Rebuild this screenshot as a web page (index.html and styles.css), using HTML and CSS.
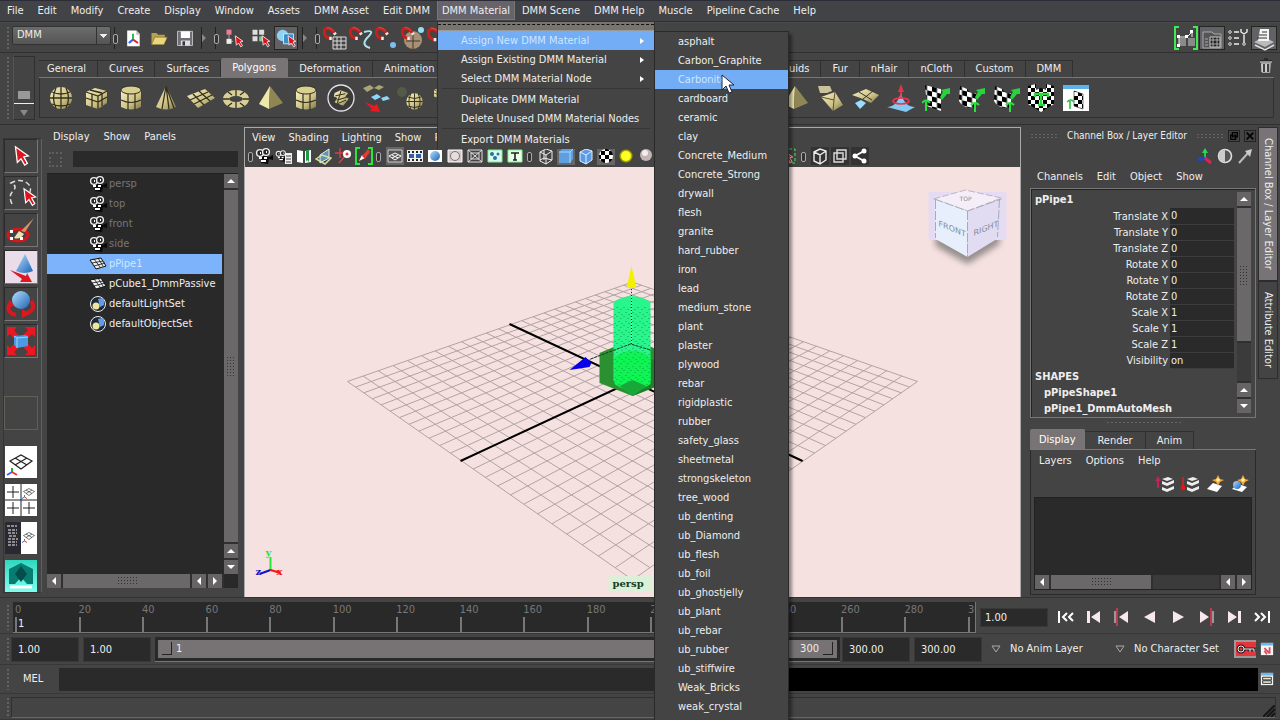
FILE: index.html
```html
<!DOCTYPE html>
<html lang="en">
<head>
<meta charset="utf-8">
<title>DMM Scene Editor</title>
<link rel="stylesheet" href="styles.css">
</head>
<body>
<svg class="defs" aria-hidden="true">
  <defs>
    <linearGradient id="gold" x1="0" y1="0" x2="1" y2="1"><stop offset="0" stop-color="#f8f2c0"/><stop offset=".6" stop-color="#cbc084"/><stop offset="1" stop-color="#7d7446"/></linearGradient>
    <linearGradient id="sky" x1="0" y1="0" x2="1" y2="1"><stop offset="0" stop-color="#b5e0ff"/><stop offset="1" stop-color="#1b62b5"/></linearGradient>
    <linearGradient id="teal" x1="0" y1="0" x2="0" y2="1"><stop offset="0" stop-color="#2fd8c0"/><stop offset="1" stop-color="#7ffff0"/></linearGradient>
    <pattern id="chk" width="8" height="8" patternUnits="userSpaceOnUse"><rect width="8" height="8" fill="#fff"/><path d="M0 0h4v4H0zM4 4h4v4H4z" fill="#000"/></pattern>
    <pattern id="chkbig" width="10" height="10" patternUnits="userSpaceOnUse" patternTransform="skewY(14)"><rect width="10" height="10" fill="#fff"/><path d="M0 0h5v5H0zM5 5h5v5H5z" fill="#000"/></pattern>
    <pattern id="specks" width="7" height="9" patternUnits="userSpaceOnUse"><path d="M1 1h1v1H1zM5 3h1v1H5zM3 6h1v1H3zM6 8h1v1H6z" fill="#0a7a3c"/></pattern>
    <filter id="soft" x="-20%" y="-20%" width="140%" height="140%"><feGaussianBlur stdDeviation="3"/></filter>
  </defs>
  <symbol id="arrow" viewBox="0 0 24 24"><path d="M6 2l2 17 4-4 4 7 3-2-4-7 5-1z" fill="#e0121c" stroke="#fff" stroke-width="1.4"/></symbol>
  <symbol id="magnet" viewBox="0 0 24 24"><path d="M12 19C1 18-1 5 6 3c6-1 9 3 13 8" fill="none" stroke="#c8201c" stroke-width="5"/><path d="M6 2c4-1 8 2 11 5" fill="none" stroke="#ee6a5c"/><path d="M10 19l4 0M18 10l2 3" stroke="#eee" stroke-width="5"/></symbol>
  <symbol id="sphere" viewBox="0 0 28 28"><circle cx="14" cy="14" r="11" fill="url(#gold)"/><path d="M3 14h22M5 8q9 4 18 0M5 20q9 4 18 0M14 3v22M9 4q-5 10 0 20M19 4q5 10 0 20" fill="none" stroke="#34301d" stroke-width="1.3"/></symbol>
  <symbol id="box" viewBox="0 0 28 28"><path d="M4 8l9-4 12 3v12l-9 6-12-4z" fill="url(#gold)"/><path d="M4 8l12 4 9-5M16 12v13M8 6l12 3M10 10v13M4 14l12 4 9-5M20 9v13" fill="none" stroke="#34301d" stroke-width="1.3"/></symbol>
  <symbol id="cyl" viewBox="0 0 28 28"><path d="M4 6v17q10 5 20 0V6z" fill="url(#gold)"/><ellipse cx="14" cy="6" rx="10" ry="4" fill="#d8d093" stroke="#34301d"/><path d="M4 16q10 5 20 0M11 10v16M18 10v16" fill="none" stroke="#34301d" stroke-width="1.2"/></symbol>
  <symbol id="cone" viewBox="0 0 28 28"><path d="M14 2L4 23q10 5 20 0z" fill="url(#gold)"/><path d="M14 2l-4 23M14 2l3 23M14 2l8 22" stroke="#34301d" stroke-width="1.3"/></symbol>
  <symbol id="plane" viewBox="0 0 28 28"><path d="M0 12L18 5l10 9-17 10z" fill="url(#gold)"/><path d="M3 16l18-8M7 20l18-9M6 10l11 11M12 7l11 10" stroke="#34301d" stroke-width="1.3"/></symbol>
  <symbol id="torus" viewBox="0 0 28 28"><ellipse cx="14" cy="15" rx="10" ry="6" fill="none" stroke="#d8cf98" stroke-width="6"/><path d="M14 6v6M14 18v6M6 8l4 3M22 8l-4 3M6 22l4-3M22 22l-4-3M1 15h6M21 15h6" stroke="#34301d" stroke-width="1.3"/></symbol>
  <symbol id="pyr" viewBox="0 0 28 28"><path d="M13 2L2 20l10 5z" fill="#eee8aa"/><path d="M13 2l-1 23 14-6z" fill="#8f8656"/></symbol>
  <symbol id="patch" viewBox="0 0 28 28"><path d="M5 7l8-4 11 4-4 5 5 3-8 10-12-5 4-6-5-2z" fill="url(#gold)"/><path d="M6 11l14-3M8 17l14-4M9 22l12-5M14 4l-5 17" stroke="#34301d" stroke-width="1.4"/></symbol>
  <symbol id="checks" viewBox="0 0 28 28"><path d="M3 1l16 4v22L5 22z" fill="url(#chkbig)"/><path d="M18 13l3-5-2-2 9-2 0 6-3 0-5 6z" fill="#29d33c"/><path d="M0 19q4-5 8 0M4 18v9" fill="none" stroke="#29e33c" stroke-width="2"/></symbol>
  <symbol id="checkbend" viewBox="0 0 28 28"><path d="M3 2l7 3q3 5 9 4v14q-12 3-17-6z" fill="url(#chkbig)"/><path d="M18 13l3-5-2-2 9-2 0 6-3 0-5 6z" fill="#29d33c"/><path d="M14 21q4-4 8 0M18 20v8" fill="none" stroke="#29e33c" stroke-width="2"/></symbol>
  <symbol id="cam" viewBox="0 0 18 18"><path d="M6 8l8 2 4-2v5l-4-1-1 5-7-1z" fill="#090909"/><circle cx="5" cy="6" r="3.4" fill="#292929" stroke="#eee" stroke-width="1.4"/><circle cx="11" cy="5" r="3.4" fill="#292929" stroke="#eee" stroke-width="1.4"/><path d="M5 6h1M11 5h1M4 11h3M6 14h5M9 11h3" stroke="#fff" stroke-width="2"/></symbol>
  <symbol id="mesh" viewBox="0 0 18 18"><path d="M1 5l11-2 5 8-10 3z" fill="#eee" stroke="#111"/><path d="M3 8l11-2M5 11l11-3M5 4l6 8M9 3l5 8" stroke="#111" stroke-width=".8"/></symbol>
  <symbol id="set" viewBox="0 0 18 18"><circle cx="9" cy="9" r="7.5" fill="#202a35" stroke="#eee"/><path d="M9 4l4-1 2 2v5l-4 2z" fill="#5f9cec"/><circle cx="7" cy="11" r="3.5" fill="#efe69d"/></symbol>
  <symbol id="grid4" viewBox="0 0 32 32"><path d="M5 15l11-6 11 6-11 8zM10 12l12 7M22 12l-12 7" fill="none" stroke="#222" stroke-width="1.2"/><path d="M7 22v4" stroke="#2a4" stroke-width="2"/><path d="M7 26l-5 3" stroke="#36f" stroke-width="2"/><path d="M7 26l5 3" stroke="#e33" stroke-width="2"/></symbol>
  <symbol id="glass" viewBox="0 0 18 18"><path d="M3 5l6-3 6 2v9l-6 4-6-3zM3 5l6 3 6-4M9 8v9M7 3v10M3 13l4-2 8 2" fill="none" stroke="#eee"/></symbol>
  <symbol id="layers" viewBox="0 0 20 20"><path d="M7 7l5 2 7-3v3l-7 3-5-2zM7 13l5 2 7-3v3l-7 3-5-2zM7 5l6-2 5 2-6 2z" fill="#eee"/></symbol>
  <symbol id="star" viewBox="0 0 20 20"><path d="M13 1l2 4 4 1-4 2-2 4-2-4-4-2 4-1z" fill="#f6a637"/><circle cx="13" cy="6" r="1.7" fill="#fff29c"/></symbol>
  <symbol id="win" viewBox="0 0 16 16"><path d="M1 1h14v14H1z" fill="#f4f4f4"/><path d="M1 1h14v3H1z" fill="#69b9ef"/></symbol>
</svg>

<nav class="menubar" aria-label="Main menu">
  <button>File</button><button>Edit</button><button>Modify</button><button>Create</button><button>Display</button><button>Window</button><button>Assets</button><button>DMM Asset</button><button>Edit DMM</button>
  <div class="anchor"><button class="open">DMM Material</button>
    <div class="menu" role="menu">
      <div class="tear"></div>
      <div class="anchor"><button class="item lit" role="menuitem">Assign New DMM Material<i class="more"></i></button>
        <div class="menu sub" role="menu">
          <button class="item">asphalt</button><button class="item">Carbon_Graphite</button>
          <div class="anchor"><button class="item lit">Carbonite</button>
            <svg class="pointer" viewBox="0 0 14 20"><path d="M1 1v15l4-4 3 7 3-1-3-7h5z" fill="#fff" stroke="#223" stroke-width="1"/></svg></div>
          <button class="item">cardboard</button><button class="item">ceramic</button><button class="item">clay</button><button class="item">Concrete_Medium</button><button class="item">Concrete_Strong</button><button class="item">drywall</button><button class="item">flesh</button><button class="item">granite</button><button class="item">hard_rubber</button><button class="item">iron</button><button class="item">lead</button><button class="item">medium_stone</button><button class="item">plant</button><button class="item">plaster</button><button class="item">plywood</button><button class="item">rebar</button><button class="item">rigidplastic</button><button class="item">rubber</button><button class="item">safety_glass</button><button class="item">sheetmetal</button><button class="item">strongskeleton</button><button class="item">tree_wood</button><button class="item">ub_denting</button><button class="item">ub_Diamond</button><button class="item">ub_flesh</button><button class="item">ub_foil</button><button class="item">ub_ghostjelly</button><button class="item">ub_plant</button><button class="item">ub_rebar</button><button class="item">ub_rubber</button><button class="item">ub_stiffwire</button><button class="item">Weak_Bricks</button><button class="item">weak_crystal</button>
        </div>
      </div>
      <button class="item">Assign Existing DMM Material<i class="more"></i></button>
      <button class="item">Select DMM Material Node<i class="more"></i></button>
      <hr>
      <button class="item">Duplicate DMM Material</button>
      <button class="item">Delete Unused DMM Material Nodes</button>
      <hr>
      <button class="item">Export DMM Materials</button>
    </div>
  </div>
  <button>DMM Scene</button><button>DMM Help</button><button>Muscle</button><button>Pipeline Cache</button><button>Help</button>
</nav>

<div class="status">
  <i class="grip"></i>
  <select class="mode" aria-label="Menu set"><option>DMM</option></select>
  <i class="split"></i>
  <button class="tool" aria-label="New scene"><svg viewBox="0 0 24 24"><path d="M5 3h11l4 4v15H5z" fill="#fff"/><path d="M16 3v5h4" fill="#bbb"/><path d="M12 7v7" stroke="#1a3" stroke-width="2"/><path d="M12 14l-5 4" stroke="#26f" stroke-width="2.5"/><path d="M12 14l6 4" stroke="#e22" stroke-width="2.5"/></svg></button>
  <button class="tool" aria-label="Open scene"><svg viewBox="0 0 24 24"><path d="M3 20V6h6l2 2h8v3" fill="#b9a04c"/><path d="M7 11h15l-4 9H3z" fill="#e9d67d" stroke="#6b5a22" stroke-width=".6"/></svg></button>
  <button class="tool" aria-label="Save scene"><svg viewBox="0 0 24 24"><path d="M3 4h18v17H3z" fill="#6f6f75" stroke="#ccc"/><path d="M7 4h11v8H7z" fill="#fff"/><path d="M7 15h11v6H7z" fill="#ddd"/><path d="M9 16h3v5H9z" fill="#333"/></svg></button>
  <i class="split tri"></i><i class="split"></i>
  <button class="tool" aria-label="Select by hierarchy"><svg viewBox="0 0 24 24"><path d="M3 2h6v6H3z" fill="#ef7d95"/><path d="M6 8v8h5" fill="none" stroke="#bbb"/><path d="M3 13h6v6H3z" fill="#eee"/><use href="#arrow" x="9" y="8" width="17" height="16"/></svg></button>
  <button class="tool" aria-label="Select by object"><svg viewBox="0 0 24 24"><path d="M3 2h6v6H3zM11 2h6v6h-6zM3 10h6v6H3z" fill="#ddd"/><path d="M11 10h6v6h-6z" fill="#6fd489"/><use href="#arrow" x="10" y="8" width="17" height="16"/></svg></button>
  <button class="tool on" aria-label="Select by component"><svg viewBox="0 0 24 24"><circle cx="8" cy="9" r="7" fill="#91d2f2"/><path d="M9 7h12v12H9z" fill="#3a8fc6" stroke="#d7f7ff"/><use href="#arrow" x="10" y="8" width="17" height="16"/></svg></button>
  <i class="split tri"></i><i class="split"></i>
  <button class="tool wide" aria-label="Snap to grids"><svg viewBox="0 0 24 24"><use href="#magnet" width="15" height="16"/><path d="M10 11h13v12H10zM14 11v12M18 11v12M10 15h13M10 19h13" fill="none" stroke="#ddd"/></svg></button>
  <button class="tool wide" aria-label="Snap to curves"><svg viewBox="0 0 24 24"><use href="#magnet" width="15" height="16"/><path d="M15 6q12-3 4 5t2 11" fill="none" stroke="#a9e5ef" stroke-width="2"/></svg></button>
  <button class="tool wide" aria-label="Snap to points"><svg viewBox="0 0 24 24"><use href="#magnet" width="15" height="16"/><circle cx="18" cy="19" r="3" fill="#7ebdf2"/></svg></button>
  <button class="tool wide" aria-label="Snap to center"><svg viewBox="0 0 24 24"><circle cx="12" cy="14" r="9" fill="#a89277"/><path d="M5 15h14M12 6v17" stroke="#40372b"/><use href="#magnet" width="15" height="16"/><circle cx="20" cy="4" r="3" fill="#91e1f5"/></svg></button>
  <button class="tool wide" aria-label="Snap to view planes"><svg viewBox="0 0 24 24"><use href="#magnet" width="16" height="18"/></svg></button>
  <span class="fill"></span>
  <button class="tool ui" aria-label="Modeling toolkit"><svg viewBox="0 0 24 24"><path d="M5 1H1v22h4M19 1h4v22h-4" fill="none" stroke="#43e653" stroke-width="2"/><path d="M5 12h7v8H5zM14 12h7v8h-7z" fill="#8a8a8a"/><path d="M5 10v10M5 11h8M13 11l5-5v5" stroke="#eee" fill="none"/><path d="M3 9h3v3H3zM11 9h3v3h-3zM16 4h3v3h-3zM3 18h3v3H3z" fill="#fff"/></svg></button>
  <button class="tool ui on" aria-label="Attribute editor"><svg viewBox="0 0 24 24"><path d="M3 9V5h9l2 2h7v14H3z" fill="#555" stroke="#aaa"/><path d="M10 10h10v10H10z" fill="#222" stroke="#ccc"/><path d="M10 13h10M10 17h10M13 10v10M17 10v10M5 12h3M5 15h3M5 18h3" stroke="#aaa"/></svg></button>
  <button class="tool ui" aria-label="Tool settings"><svg viewBox="0 0 24 24"><path d="M8 6h5M8 12h5M8 18h5M18 9v8M15 3v3l3 2 3-2V3" fill="none" stroke="#eee" stroke-width="1.4"/><g fill="none" stroke="#ddd"><circle cx="4" cy="6" r="1.3"/><circle cx="4" cy="12" r="1.3"/><circle cx="4" cy="18" r="1.3"/><circle cx="18" cy="18" r="1.3"/></g></svg></button>
  <button class="tool ui on" aria-label="Channel box"><svg viewBox="0 0 24 24"><path d="M2 15l10-5 10 5-9 5z" fill="#bbb"/><path d="M3 18l10 5 9-5" fill="none" stroke="#ddd" stroke-width="1.5"/><path d="M8 2h9v12H6z" fill="#f4f4f4"/><path d="M10 5h5M7 8h8M5 11h10" stroke="#333" stroke-width="1.2"/></svg></button>
</div>

<section class="shelf">
  <i class="grip"></i>
  <div class="shelfmenu"><i class="tabsq"></i><i class="rule"></i><i class="down"></i></div>
  <div class="shelfmain">
    <div class="tabs shelftabs"><button>General</button><button>Curves</button><button>Surfaces</button><button class="on">Polygons</button><button>Deformation</button><button>Animation</button><button class="far">Fluids</button><button>Fur</button><button>nHair</button><button>nCloth</button><button>Custom</button><button>DMM</button>
      <svg class="trash" viewBox="0 0 16 18"><path d="M3 6h10l-1 10H4z" fill="#aaa"/><path d="M2 4h12M6 2h4M6 7v8M10 7v8" stroke="#222" stroke-width="1.5"/><path d="M2 5h12M8 7v8M4 7v8" stroke="#eee"/></svg></div>
    <div class="shelfbody">
      <svg><use href="#sphere"/></svg><svg><use href="#box"/></svg><svg><use href="#cyl"/></svg><svg><use href="#cone"/></svg><svg><use href="#plane"/></svg><svg><use href="#torus"/></svg><svg><use href="#pyr"/></svg><svg><use href="#cyl"/></svg>
      <svg viewBox="0 0 28 28"><circle cx="14" cy="14" r="13" fill="#3a3a3a" stroke="#e6dfe6" stroke-width="1.3"/><use href="#patch" x="4" y="4" width="20" height="20"/></svg>
      <svg viewBox="0 0 28 28"><path d="M1 4l7-3 4 3-7 4zM12 4l5-3 5 2-5 3z" fill="#aaa477"/><path d="M9 13l6-3 4 3-6 3zM19 14l6-2 3 3-7 2z" fill="#8bd7ff"/><path d="M3 18l9 4 3-2 3 8-10-1 2-2z" fill="#ee1825"/></svg>
      <svg viewBox="0 0 28 28"><circle cx="5" cy="8" r="5" fill="#555947"/><use href="#sphere" x="7" y="7" width="21" height="21"/></svg>
      <svg viewBox="0 0 28 28"><use href="#box" x="0" y="2" width="14" height="14"/></svg>
      <svg class="late"><use href="#pyr"/></svg>
      <svg viewBox="0 0 28 28"><path d="M1 2h12l2 5-5 2H3z" fill="#c9c29a"/><path d="M4 13l14-5 8 13-10 6z" fill="url(#gold)"/><path d="M4 13l13 3 1-8M17 16l-1 11" fill="none" stroke="#5b5231"/></svg>
      <svg viewBox="0 0 28 28"><path d="M0 11L14 5l13 6-8 8-8-4z" fill="url(#gold)"/><path d="M7 8l13 8M11 15l10-8" stroke="#333"/><path d="M3 19l6-3 5 3-6 6z" fill="#9bddff"/></svg>
      <svg viewBox="0 0 28 28"><path d="M0 23q10 0 14-15 3 15 14 15l-9 5z" fill="#86c8f4"/><ellipse cx="14" cy="17" rx="8" ry="3" fill="none" stroke="#ea344c" stroke-width="1.6"/><path d="M14 14V6" stroke="#ea344c" stroke-width="1.6"/><path d="M11 8l3-8 3 8z" fill="#e53449"/></svg>
      <svg><use href="#checks"/></svg><svg><use href="#checkbend"/></svg><svg><use href="#checkbend"/></svg>
      <svg viewBox="0 0 28 28"><path d="M1 2l8-2v6l5-2 5 2V0l8 2v18l-13 8L1 20z" fill="url(#chk)"/><path d="M8 13V10h13v3M14 10v12M11 21h7" stroke="#24df37" stroke-width="2.4" fill="none"/></svg>
      <svg viewBox="0 0 28 28"><path d="M1 1h26v26H1z" fill="#fff"/><path d="M1 1h26v4H1z" fill="#5db2ed"/><path d="M12 7l9 3v15l-9-3z" fill="url(#chk)" stroke="#222" stroke-width=".6"/><path d="M5 18q4-4 7 0M8 17v8" fill="none" stroke="#29c33c" stroke-width="1.6"/></svg>
    </div>
  </div>
</section>

<main>
  <aside class="toolbox">
    <button aria-label="Select"><svg><use href="#arrow"/></svg></button>
    <button aria-label="Lasso"><svg viewBox="0 0 32 32"><path d="M7 27q-4-8 1-13t-2-8q9-5 16 0t0 14" fill="none" stroke="#ddd" stroke-width="1.5" stroke-dasharray="5 3"/><use href="#arrow" x="14" y="10" width="20" height="20"/></svg></button>
    <button aria-label="Paint selection"><svg viewBox="0 0 32 32"><ellipse cx="13" cy="21" rx="10" ry="6" fill="none" stroke="#d3171b" stroke-width="3"/><path d="M9 24l5-7 5 3q-4 6-10 4z" fill="#f2dfad"/><path d="M16 17L29 4l-9 14z" fill="#d8926f"/><path d="M5 16h3v3H5zM5 23h3v3H5zM15 23h3v3h-3z" fill="#fff"/></svg></button>
    <button class="on" aria-label="Move"><svg viewBox="0 0 32 32"><path d="M20 3l-9 17q8 4 17 0z" fill="url(#sky)"/><path d="M5 19l16 6 1-3 5 9-12 0 2-3z" fill="#e01621"/></svg></button>
    <button aria-label="Rotate"><svg viewBox="0 0 32 32"><path d="M6 14q-7 10 5 13M26 13q7 10-8 13" fill="none" stroke="#d71820" stroke-width="4"/><path d="M3 19l7-1-5-6zM17 21v9l8-4z" fill="#e01621"/><circle cx="16" cy="12" r="9" fill="url(#sky)"/></svg></button>
    <button aria-label="Scale"><svg viewBox="0 0 32 32"><path d="M2 2h10l-3 3 5 6-4 4L5 9l-3 3zM30 2v10l-3-3-6 6-4-4 6-6-3-3zM2 30V20l3 3 6-6 4 4-6 6 3 3zM30 30H20l3-3-6-6 4-4 6 6 3-3z" fill="#ee1721"/><path d="M9 11l12-1 2 2v9l-11 2-3-3z" fill="#4a9ae6"/><path d="M9 11l3 2 11-1M12 13v10" stroke="#9ad8ff" fill="none"/></svg></button>
    <span class="slot"></span>
    <button class="blank" aria-label="Last tool"></button>
    <button class="white first" aria-label="Single view"><svg><use href="#grid4"/></svg></button>
    <button class="white" aria-label="Four view"><svg viewBox="0 0 32 32"><path d="M16 0v32M0 16h32" stroke="#222"/><path d="M2 8h12M8 2v12M2 24h12M8 18v12M18 24h12M24 18v12" stroke="#222"/><path d="M17 0h15v15H17z" fill="#fff"/><use href="#grid4" x="16" y="0" width="16" height="16"/></svg></button>
    <button class="white" aria-label="Outliner view"><svg viewBox="0 0 32 32"><path d="M0 0h16v32H0z" fill="#292932"/><path d="M2 4h10M3 8h9M3 11h9M4 14h8M3 17h10M3 20h9M3 23h9" stroke="#eee" stroke-dasharray="3 1"/><use href="#grid4" x="16" y="4" width="16" height="20"/></svg></button>
    <button class="white logo" aria-label="Maya"><svg viewBox="0 0 32 32"><path d="M0 0h32v32H0z" fill="url(#teal)"/><path d="M4 24V9L16 3l12 6v15h-6l-6-7-6 7z" fill="#087c70"/><path d="M10 14l6-8 6 8-6 8z" fill="#034e4c"/><path d="M5 27h22" stroke="#fff" stroke-width="3"/></svg></button>
  </aside>

  <aside class="outliner">
    <nav class="panelmenu"><button>Display</button><button>Show</button><button>Panels</button></nav>
    <div class="search"><i></i><input type="text" aria-label="Filter"></div>
    <div class="listwrap">
      <ul>
        <li class="dim"><svg><use href="#cam"/></svg>persp</li><li class="dim"><svg><use href="#cam"/></svg>top</li><li class="dim"><svg><use href="#cam"/></svg>front</li><li class="dim"><svg><use href="#cam"/></svg>side</li>
        <li class="sel"><svg><use href="#mesh"/></svg>pPipe1</li><li><svg><use href="#mesh"/></svg>pCube1_DmmPassive</li><li><svg><use href="#set"/></svg>defaultLightSet</li><li><svg><use href="#set"/></svg>defaultObjectSet</li>
      </ul>
      <div class="vbar"><button class="sb up" aria-label="Scroll up"></button><i class="thumb"></i><button class="sb up" aria-label="Scroll up"></button><button class="sb dn" aria-label="Scroll down"></button></div>
    </div>
    <div class="hbar"><button class="sb lt" aria-label="Scroll left"></button><i class="thumb"></i><button class="sb lt" aria-label="Scroll left"></button><button class="sb rt" aria-label="Scroll right"></button><i class="corner"></i></div>
  </aside>

  <section class="view">
    <nav class="panelmenu"><button>View</button><button>Shading</button><button>Lighting</button><button>Show</button><button>Renderer</button></nav>
    <div class="viewtools">
      <i class="split"></i>
      <svg><use href="#cam"/></svg>
      <svg viewBox="0 0 18 18"><use href="#cam" width="13" height="18"/><path d="M10 6h7v11h-7z" fill="#eee"/><path d="M11 9h5M11 12h5M11 15h5" stroke="#444"/></svg>
      <svg viewBox="0 0 18 18"><path d="M2 3l6 1v12l-6-1zM10 4l6-1v12l-6 1z" fill="#fff"/><path d="M11 3h3v12l-2-2-1 2z" fill="#1b9d45"/></svg>
      <svg viewBox="0 0 18 18"><path d="M5 8l9-6v9l-9 5z" fill="#6791bd" stroke="#eee"/><path d="M1 12l6-4 9 3-6 6z" fill="none" stroke="#cfe889" stroke-width="1.5"/></svg>
      <svg viewBox="0 0 18 18"><path d="M5 1v10M0 6h10M4 16l6-7" stroke="#d83e45" stroke-width="1.5"/><circle cx="12" cy="7" r="4" fill="#fff"/><circle cx="12" cy="7" r="1.5" fill="#e33"/></svg>
      <svg viewBox="0 0 18 18"><path d="M5 1H1v16h4M13 1h4v16h-4" fill="none" stroke="#2de43c" stroke-width="2"/><path d="M4 14l3-6 3 3z" fill="#fff"/><path d="M7 9l6-7 2 3-5 7z" fill="#e4392b"/></svg>
      <i class="split"></i>
      <svg class="on" viewBox="0 0 18 18"><path d="M2 3h14v12H2z" fill="#555" stroke="#ccc"/><path d="M3 9l6-3 6 3-6 4zM6 8l6 3M12 8l-6 3" fill="none" stroke="#fff"/></svg>
      <svg viewBox="0 0 18 18"><path d="M1 3h16v12H1z" fill="#eee"/><path d="M2 5h14M2 13h14" stroke="#222" stroke-width="2" stroke-dasharray="2"/><path d="M3 7h5v4H3zM10 7h5v4h-5z" fill="#345f9f"/></svg>
      <svg viewBox="0 0 18 18"><path d="M2 3h14v12H2z" fill="#fff"/><circle cx="9" cy="9" r="5" fill="url(#sky)"/></svg>
      <svg viewBox="0 0 18 18"><path d="M2 3h14v12H2z" fill="#d9c7c7" stroke="#fff"/><circle cx="9" cy="9" r="4.5" fill="#e7dddd" stroke="#777"/></svg>
      <svg viewBox="0 0 18 18"><path d="M2 3h14v12H2zM2 3l14 12M16 3L2 15M5 6h8v6H5z" fill="none" stroke="#ddd"/></svg>
      <svg viewBox="0 0 18 18"><path d="M2 3h14v12H2z" fill="#dcf8f2" stroke="#78f585"/><circle cx="6" cy="7" r="2" fill="#2473a1"/><circle cx="9" cy="11" r="2" fill="#2473a1"/><circle cx="12" cy="7" r="1.5" fill="#2473a1"/></svg>
      <svg viewBox="0 0 18 18"><path d="M2 3h14v12H2z" fill="#eaffea" stroke="#78f585"/><path d="M5 6h8M9 6v7M7 13h4" stroke="#222" stroke-width="1.6"/></svg>
      <i class="split"></i>
      <svg><use href="#glass"/></svg>
      <svg class="on" viewBox="0 0 18 18"><path d="M2 5l3-3h11v10l-3 4H2z" fill="#5f9fe0"/><path d="M2 5h11v11M13 5l3-3" stroke="#a9d7ff" fill="none"/></svg>
      <svg viewBox="0 0 18 18"><path d="M3 5l6-3 6 2v9l-6 4-6-3z" fill="#5a9be8"/><path d="M3 5l6 3 6-4M9 8v9M3 5v9l6 3 6-4V4L9 2z" fill="none" stroke="#dff1ff"/></svg>
      <svg class="on" viewBox="0 0 18 18"><circle cx="9" cy="9" r="7" fill="url(#chk)"/></svg>
      <svg viewBox="0 0 18 18"><circle cx="9" cy="9" r="6.5" fill="#a6a600"/><circle cx="9" cy="9" r="5" fill="#ff2"/></svg>
      <svg viewBox="0 0 18 18"><circle cx="9" cy="8" r="6" fill="#c4b5b5"/><circle cx="8" cy="6" r="3" fill="#eee"/></svg>
      <svg class="late" viewBox="0 0 18 18"><path d="M9 2h6v14H9" fill="none" stroke="#45e85a" stroke-dasharray="3 2"/><use href="#arrow" x="1" y="3" width="14" height="14"/></svg>
      <i class="split"></i>
      <svg class="dark" viewBox="0 0 18 18"><path d="M3 5l6-3 6 2v9l-6 4-6-3zM3 5l6 3 6-4M9 8v9" fill="none" stroke="#eee" stroke-width="1.4"/></svg>
      <svg class="dark" viewBox="0 0 18 18"><path d="M3 6h9v9H3zM6 3h9v9H6z" fill="none" stroke="#ddd" stroke-width="1.4"/></svg>
      <svg class="dark" viewBox="0 0 18 18"><path d="M4 9l9-5M4 9l9 5" stroke="#fff" stroke-width="2"/><circle cx="4" cy="9" r="2.5" fill="#fff"/><circle cx="13" cy="4" r="2.5" fill="#fff"/><circle cx="13" cy="14" r="2.5" fill="#fff"/></svg>
    </div>
    <svg class="scene" viewBox="245 167 776 430" preserveAspectRatio="xMidYMid slice">
      <g id="floor" stroke="#9c8e90" stroke-width="1" opacity=".75"></g>
      <path d="M510 324L803 461M461 461L756 324" stroke="#000" stroke-width="2"/>
      <path d="M600 353l33-14 33 14v30l-33 13-33-13z" fill="#2b9130"/>
      <path d="M633 370v26l33-13v-30z" fill="#1f8029"/>
      <path d="M614 302q18-12 37 0v79q-18 14-37 0z" fill="#28f58c"/>
      <path d="M615 357q18-13 36 0v27q-18 13-36 0z" fill="#10f354"/>
      <path d="M614 307h37v78h-37z" fill="url(#specks)" opacity=".7"/>
      <path d="M620 386l13-6 14 6-14 10z" fill="#18a83a"/>
      <path d="M632 344V288" stroke="#d7e83b" stroke-width="1"/><path d="M632 344V288" stroke="#222" stroke-dasharray="1 2"/>
      <path d="M591 359l40-15 20 6" fill="none" stroke="#163a28" stroke-dasharray="3 1"/>
      <path d="M632 266l-5 22h10z" fill="#f4f000"/><path d="M570 370l16-13 6 6-2 4z" fill="#0800e8"/>
      <g class="cube"><path d="M936 230l31 10 33-10v14l-32 20-32-18z" fill="#555" opacity=".6" filter="url(#soft)"/><path d="M929 192h78v48h-78z" fill="#e5dcf4"/><path d="M934 199l32-9 36 8-34 13z" fill="#f5eef8" stroke="#bdb5c5" stroke-dasharray="7 2"/><path d="M935 199l33 12v46l-32-18z" fill="#e7effd"/><path d="M968 211l34-12-3 39-31 19z" fill="#e1dcf2"/><path d="M968 211v46M936 200v38M1000 199l-2 38M935 199l33 12 34-12" fill="none" stroke="#a7abb8" stroke-dasharray="9 2"/>
        <text transform="matrix(1 .4 0 1 939 226)">FRONT</text><text transform="matrix(1 -.4 0 1 974 236)">RIGHT</text><text class="small" x="960" y="201">TOP</text></g>
      <path d="M271 570v-13" stroke="#2be53b" stroke-width="2"/><path d="M271 570l-11 4" stroke="#1411c5" stroke-width="2"/><path d="M271 570l10 3" stroke="#f21717" stroke-width="2"/>
      <text class="axis" x="266" y="556" fill="#20e73a">y</text><text class="axis" x="256" y="575" fill="#1411c5">z</text><text class="axis" x="277" y="575" fill="#f21717">x</text>
      <path d="M609 576h44v15h-44z" fill="#dcefd9"/><text class="camname" x="613" y="587">persp</text>
    </svg>
  </section>

  <aside class="right">
    <header><i class="dots"></i><span>Channel Box / Layer Editor</span><i class="dots"></i><button aria-label="Float"><svg viewBox="0 0 12 12"><path d="M4 2h6v5H4zM2 5h6v5H2z" fill="#444" stroke="#000" stroke-width="1.5"/></svg></button><button aria-label="Close"><svg viewBox="0 0 12 12"><path d="M2 2l8 8M10 2l-8 8" stroke="#000" stroke-width="2"/></svg></button></header>
    <div class="chanicons">
      <svg viewBox="0 0 18 18"><path d="M9 11V4" stroke="#2c5" stroke-width="2"/><path d="M6 6l3-5 3 5z" fill="#2d5"/><path d="M9 11l-7 2" stroke="#24c" stroke-width="3"/><path d="M9 11l6 5" stroke="#d25" stroke-width="3"/></svg>
      <svg viewBox="0 0 18 18"><circle cx="9" cy="9" r="6.5" fill="#555" stroke="#ddd" stroke-width="1.6"/><path d="M9 3a6 6 0 000 12z" fill="#ccc"/></svg>
      <svg viewBox="0 0 18 18"><path d="M3 16L12 6" stroke="#bbb" stroke-width="2"/><path d="M9 4l7-2-2 8z" fill="#ccc"/></svg>
    </div>
    <nav class="panelmenu"><button>Channels</button><button>Edit</button><button>Object</button><button>Show</button></nav>
    <div class="channels">
      <div class="chanlist">
        <b>pPipe1</b>
        <table>
          <tr><th>Translate X</th><td>0</td></tr><tr><th>Translate Y</th><td>0</td></tr><tr><th>Translate Z</th><td>0</td></tr><tr><th>Rotate X</th><td>0</td></tr><tr><th>Rotate Y</th><td>0</td></tr><tr><th>Rotate Z</th><td>0</td></tr><tr><th>Scale X</th><td>1</td></tr><tr><th>Scale Y</th><td>1</td></tr><tr><th>Scale Z</th><td>1</td></tr><tr><th>Visibility</th><td>on</td></tr>
        </table>
        <b>SHAPES</b><b class="in">pPipeShape1</b><b class="in">pPipe1_DmmAutoMesh</b>
      </div>
      <div class="vbar"><button class="sb up" aria-label="Scroll up"></button><i class="thumb"></i><i class="track"></i><button class="sb up" aria-label="Scroll up"></button><button class="sb dn" aria-label="Scroll down"></button></div>
    </div>
    <i class="dots mid"></i>
    <div class="tabs layertabs"><button class="on">Display</button><button>Render</button><button>Anim</button></div>
    <div class="layers">
      <nav class="panelmenu"><button>Layers</button><button>Options</button><button>Help</button></nav>
      <div class="layericons">
        <svg viewBox="0 0 20 20"><use href="#layers"/><path d="M3 6v8" stroke="#c22350" stroke-width="2"/><path d="M0 7l3-5 3 5z" fill="#c22350"/></svg>
        <svg viewBox="0 0 20 20"><use href="#layers"/><path d="M3 3v10" stroke="#d22" stroke-width="1.5"/><circle cx="3" cy="14" r="2.4" fill="#e11"/></svg>
        <svg viewBox="0 0 20 20"><path d="M2 15l6-6 9 3-5 6z" fill="#fff"/><use href="#star"/></svg>
        <svg viewBox="0 0 20 20"><path d="M2 15l6-5 9 3-5 5z" fill="#fff"/><circle cx="7" cy="11" r="4" fill="url(#sky)"/><use href="#star"/></svg>
      </div>
      <div class="layerlist"><div class="hbar"><button class="sb lt" aria-label="Scroll left"></button><i class="thumb"></i><i class="track"></i><button class="sb lt" aria-label="Scroll left"></button><button class="sb rt" aria-label="Scroll right"></button></div></div>
    </div>
  </aside>
  <div class="sidetabs"><button class="on">Channel Box / Layer Editor</button><button>Attribute Editor</button></div>
</main>

<footer>
  <div class="row time">
    <i class="grip"></i>
    <div class="slider"><span>0</span><span>20</span><span>40</span><span>60</span><span>80</span><span>100</span><span>120</span><span>140</span><span>160</span><span>180</span><span>200</span><span>220</span><span>240</span><span>260</span><span>280</span><span class="end">300</span><em>1</em></div>
    <input class="num cur" value="1.00" aria-label="Current time">
    <div class="play">
      <button aria-label="Go to start"><svg viewBox="0 0 18 18"><path d="M2 3v12M10 5L6 9l4 4M16 5l-4 4 4 4" fill="none" stroke="#fff" stroke-width="2"/></svg></button>
      <button aria-label="Step back"><svg viewBox="0 0 18 18"><path d="M2 3h3v12H2zM15 3v12L6 9z" fill="#f6e8ec"/></svg></button>
      <button aria-label="Previous key"><svg viewBox="0 0 18 18"><path d="M4 0v18" stroke="#e2384e" stroke-width="1.5"/><path d="M2 3v12" stroke="#eee"/><path d="M15 3v12L6 9z" fill="#f6e8ec"/></svg></button>
      <button aria-label="Play backwards"><svg viewBox="0 0 18 18"><path d="M14 3v12L3 9z" fill="#f6e8ec"/></svg></button>
      <button aria-label="Play"><svg viewBox="0 0 18 18"><path d="M4 3v12l11-6z" fill="#f6e8ec"/></svg></button>
      <button aria-label="Next key"><svg viewBox="0 0 18 18"><path d="M14 0v18" stroke="#e2384e" stroke-width="1.5"/><path d="M16 3v12" stroke="#eee"/><path d="M3 3v12l9-6z" fill="#f6e8ec"/></svg></button>
      <button aria-label="Step forward"><svg viewBox="0 0 18 18"><path d="M13 3h3v12h-3zM3 3v12l9-6z" fill="#f6e8ec"/></svg></button>
      <button aria-label="Go to end"><svg viewBox="0 0 18 18"><path d="M16 3v12M2 5l4 4-4 4M8 5l4 4-4 4" fill="none" stroke="#fff" stroke-width="2"/></svg></button>
    </div>
  </div>
  <div class="row range">
    <i class="grip"></i>
    <input class="num" value="1.00" aria-label="Animation start"><input class="num" value="1.00" aria-label="Range start">
    <div class="rangebar"><div><i></i><span>1</span><span class="fill"></span><span>300</span><i></i></div></div>
    <input class="num" value="300.00" aria-label="Range end"><input class="num" value="300.00" aria-label="Animation end">
    <svg class="pickmark" viewBox="0 0 10 8"><path d="M1 1h8L5 7z" fill="none" stroke="#aaa"/></svg><select class="pick" aria-label="Animation layer"><option>No Anim Layer</option></select>
    <svg class="pickmark" viewBox="0 0 10 8"><path d="M1 1h8L5 7z" fill="none" stroke="#aaa"/></svg><select class="pick" aria-label="Character set"><option>No Character Set</option></select>
    <button class="key" aria-label="Auto key"><svg viewBox="0 0 20 14"><path d="M0 0h20v14H0z" fill="#e6343e"/><circle cx="5" cy="7" r="3" fill="none" stroke="#222" stroke-width="3"/><path d="M8 7h10v3M14 7v3" fill="none" stroke="#222" stroke-width="3"/><circle cx="5" cy="7" r="3" fill="none" stroke="#eee"/><path d="M8 7h10v3M14 7v3" fill="none" stroke="#eee"/></svg></button>
    <button class="win" aria-label="Preferences"><svg viewBox="0 0 16 16"><use href="#win"/><path d="M5 7l6 6M11 6v7M5 10l3 4" stroke="#df4556" stroke-width="2"/></svg></button>
  </div>
  <div class="row cmd">
    <i class="grip"></i><label for="mel">MEL</label><input id="mel"><output></output>
    <button class="win" aria-label="Script editor"><svg viewBox="0 0 16 16"><use href="#win"/><path d="M3 6h10v3H3zM3 10h10v3H3z" fill="#e8e5d0" stroke="#222"/></svg></button>
  </div>
  <div class="row help"><i class="grip"></i><div class="helpline"><svg viewBox="0 0 12 12"><path d="M12 0L0 12M12 4l-8 8M12 8l-4 4" stroke="#161616" stroke-width="2"/></svg></div></div>
</footer>
<script src="scene.js"></script>
</body>
</html>
```
FILE: scene.js
```js
// Draws the ground plane: 24 x 24 cells in perspective.
const floor = document.getElementById("floor");
const CELLS = 12;

function project(u, v) {
  const s = u + v;
  const w = 1 - 0.166 * s;
  return [633 + (142.5 * (u - v)) / w, (381.5 + 2.9 * s) / w];
}

function line(a, b) {
  const el = document.createElementNS("http://www.w3.org/2000/svg", "path");
  el.setAttribute("d", `M${a.join(" ")}L${b.join(" ")}`);
  floor.appendChild(el);
}

for (let i = -CELLS; i <= CELLS; i++) {
  const k = i / CELLS;
  line(project(k, -1), project(k, 1));
  line(project(-1, k), project(1, k));
}
```
FILE: styles.css
```css
* { box-sizing: border-box; }
body { margin: 0; height: 100vh; display: flex; flex-direction: column; overflow: hidden; background: #444; color: #eee; font: 11px/16px "DejaVu Sans Condensed", "DejaVu Sans", sans-serif; }
button, input, select { font: inherit; color: inherit; border: 0; padding: 0; margin: 0; background: none; white-space: nowrap; border-radius: 0; }
svg { display: block; flex: none; }
i { display: block; flex: none; }
ul { list-style: none; margin: 0; padding: 0; }
.defs { position: absolute; width: 0; height: 0; }
.fill { flex: 1; }
.anchor { position: relative; }

.menubar { display: flex; height: 22px; background: #424346; border-top: 1px solid #2b2c38; border-bottom: 1px solid #323232; position: relative; z-index: 5; }
.menubar > button { padding: 0 7px; height: 20px; }
.open { background: #67636a; height: 19px; padding: 1px 4px 0; border: 1px solid #777; border-top: 0; }
.menu { position: absolute; left: 0; top: 21px; width: 218px; background: #444; border: 1px solid #303030; border-top: 0; border-bottom: 0; }
.tear { height: 9px; padding-top: 2px; background: #77756e; border-bottom: 1px solid #999; }
.tear::after { content: ""; display: block; border-top: 1px dashed #111; }
.item { display: flex; width: 100%; height: 19px; align-items: center; padding: 0 10px 0 23px; text-align: left; }
.lit { background: #72adf5; color: #cfe6ff; }
.more { margin-left: auto; border: 3px solid transparent; border-left: 4px solid #fff; border-right: 0; }
.menu hr { height: 1px; margin: 0 4px 1px; border: 0; background: #363636; }
.sub { left: 216px; top: 0; width: 135px; border: 1px solid #2a2a2a; box-shadow: 3px 3px 3px #0006; padding-bottom: 9px; }
.pointer { position: absolute; left: 66px; top: 4px; width: 14px; height: 20px; }

.status { display: flex; align-items: center; height: 31px; padding: 0 3px 0 6px; border-bottom: 1px solid #303030; border-top: 1px solid #4a4a4a; }
.grip { width: 5px; align-self: stretch; margin: 3px 0; background: radial-gradient(circle, #777 0 1px, transparent 1px) 0 0 / 4px 4px; opacity: .6; }
.mode { appearance: none; width: 99px; height: 19px; margin: 0 0 5px 1px; padding: 0 4px; border: 1px solid #333; border-radius: 2px; background-image: linear-gradient(to bottom left, #eee 50%, transparent 50%), linear-gradient(to bottom right, #eee 50%, transparent 50%), linear-gradient(#333, #333), linear-gradient(#6c6c6c, #555); background-size: 4px 4px, 4px 4px, 1px 100%, 100% 100%; background-position: 87px 7px, 91px 7px, 83px 0, 0 0; background-repeat: no-repeat; }
.split { width: 9px; height: 22px; position: relative; background: linear-gradient(#222, #222) 3px 0 / 1px 100% no-repeat; }
.split::after { content: ""; position: absolute; left: 2px; top: 7px; width: 3px; height: 8px; border: 1px solid #aaa; border-radius: 2px; background: #333; }
.tri { width: 14px; }
.tri::after { border: 4px solid transparent; border-left: 4px solid #888; border-right: 0; background: none; border-radius: 0; width: 0; height: 0; left: 4px; }
.tool { width: 24px; height: 24px; margin: 0 1px; display: grid; place-items: center; }
.tool svg { width: 20px; height: 20px; }
.status .on { background: #626266; border: 1px solid #252525; }
.status .wide svg { width: 24px; height: 24px; }
.ui { width: 26px; margin: 0; }
.ui svg { width: 24px; height: 24px; }

.shelf { display: flex; height: 72px; padding: 3px 6px 4px; border-bottom: 1px solid #303030; }
.shelf > .grip { margin: 0 2px 0 0; }
.shelfmenu { width: 22px; border: 1px solid #303030; border-left-color: #555; padding-top: 34px; }
.tabsq { width: 12px; height: 8px; background: #999; margin: 0 auto 4px; }
.rule { height: 1px; background: #eee; }
.down { width: 8px; height: 6px; background: #888; clip-path: polygon(0 0, 100% 0, 50% 100%); margin: 6px auto 0; }
.shelfmain { flex: 1; margin-left: 4px; min-width: 0; }
.tabs { display: flex; align-items: flex-end; height: 22px; border-bottom: 1px solid #777; }
.tabs button { height: 17px; padding: 0 11px; border: 1px solid #303030; border-bottom: 0; border-left: 0; }
.shelftabs button:first-child { padding-left: 8px; }
.tabs .on { height: 19px; background: #787476; border-color: #777; color: #fff; border-radius: 2px 2px 0 0; }
.tabs .far { margin-left: 323px; }
.trash { width: 16px; height: 18px; margin: 0 0 2px auto; }
.shelfbody { display: flex; align-items: center; height: 40px; padding-left: 7px; border: 1px solid #303030; border-top: 0; overflow: hidden; }
.shelfbody svg { width: 28px; height: 28px; margin-right: 7px; }
.shelfbody .late { margin-left: 315px; }

main { flex: 1; display: flex; min-height: 0; padding: 2px 2px 0 3px; }
.toolbox { width: 39px; margin-top: 11px; border: 1px solid #353535; border-right-color: #606060; align-self: flex-start; }
.toolbox button { display: grid; place-items: center; width: 34px; height: 34px; margin-bottom: 3px; border: 1px solid #777; border-left-color: #2c2c2c; border-top-color: #2c2c2c; }
.toolbox svg { width: 32px; height: 32px; }
.toolbox button:first-child svg { width: 22px; height: 22px; }
.toolbox .on { background: #eadce8; }
.slot { display: block; height: 35px; }
.toolbox .blank { border-color: #5d6258; }
.toolbox .white { background: #fff; border: 0; width: 32px; height: 32px; margin: 0 1px 6px; }
.toolbox .first { margin-top: 16px; }
.toolbox .logo { margin-bottom: 0; }

.panelmenu { display: flex; gap: 14px; height: 20px; align-items: center; }
.outliner { width: 191px; margin: 0 6px 0 5px; display: flex; flex-direction: column; padding-bottom: 9px; }
.outliner .panelmenu { padding-left: 6px; }
.search { display: flex; gap: 11px; padding: 4px 0 0 2px; height: 21px; }
.search i { width: 13px; height: 15px; border: 2px dotted #5e5e5e; margin-top: 1px; }
.search input { flex: 1; min-width: 0; height: 16px; background: #2a2a2a; }
.listwrap { flex: 1; display: flex; margin-top: 5px; background: #292929; border-top: 1px solid #222; min-height: 0; }
.outliner ul { flex: 1; min-width: 0; margin-right: 2px; }
.outliner li { display: flex; align-items: center; height: 20px; padding-left: 42px; gap: 2px; }
.outliner li svg { width: 18px; height: 18px; }
.dim { color: #777; }
.outliner .sel { background: #7db3fa; color: #cfe8ff; }
.vbar { width: 14px; display: flex; flex-direction: column; gap: 2px; background: #303030; }
.hbar { display: flex; height: 14px; gap: 2px; background: #303030; }
.sb { width: 14px; height: 14px; flex: none; background: #666465; display: grid; place-items: center; }
.sb::after { content: ""; width: 8px; height: 4px; background: #fff; clip-path: polygon(50% 0, 100% 100%, 0 100%); }
.dn::after { clip-path: polygon(0 0, 100% 0, 50% 100%); }
.lt::after, .rt::after { width: 4px; height: 8px; clip-path: polygon(100% 0, 100% 100%, 0 50%); }
.rt::after { clip-path: polygon(0 0, 100% 50%, 0 100%); }
.thumb { flex: 1; background: #6a6869; position: relative; }
.thumb::after { content: ""; position: absolute; inset: 0; margin: auto; width: 20px; height: 10px; background: radial-gradient(circle, #333 0 1px, transparent 1px) 0 0 / 3px 3px; }
.vbar .thumb::after { width: 10px; height: 20px; }
.track { flex: none; background: #3b3b3b; }
.corner { width: 14px; background: #292929; }

.view { flex: 1; min-width: 0; display: flex; flex-direction: column; border: 1px solid #aaa; border-bottom: 0; }
.view .panelmenu { padding-left: 7px; height: 19px; gap: 13px; }
.viewtools { display: flex; align-items: center; height: 20px; padding: 0 0 2px 1px; }
.viewtools svg { width: 18px; height: 18px; margin: 0 1px; }
.viewtools .split { height: 16px; width: 11px; background: none; }
.viewtools .split:first-child { width: 8px; }
.viewtools .split::after { top: 4px; }
.viewtools .on { background: #666; }
.viewtools .dark { background: #333; }
.viewtools .late { margin-left: 124px; }
.scene { flex: 1; width: 100%; min-height: 0; background: #f5e1e0; }
.cube text { font: 8px "DejaVu Sans", sans-serif; fill: #858b99; }
.cube .small { font-size: 6px; }
.axis { font: bold 10px "DejaVu Serif", serif; }
.camname { font: bold 10px "DejaVu Serif", serif; fill: #143e24; }

.right { width: 226px; margin-left: 9px; display: flex; flex-direction: column; }
.right header { display: flex; align-items: center; height: 17px; gap: 4px; font-size: 10px; }
.right header span { flex: 1; text-align: center; }
.right header button { width: 12px; height: 12px; border: 1px solid #222; }
.right header button svg { width: 10px; height: 10px; }
.dots { width: 28px; height: 6px; background: radial-gradient(circle, #666 0 1px, transparent 1px) 0 0 / 4px 3px; }
.chanicons { display: flex; justify-content: flex-end; gap: 2px; height: 23px; padding-right: 2px; align-items: center; }
.chanicons svg { width: 18px; height: 18px; }
.right > .panelmenu { padding-left: 7px; }
.channels { display: flex; height: 230px; margin-top: 1px; border: 1px solid #777; padding: 3px 4px 4px 2px; box-shadow: inset 1px 1px #222; }
.chanlist { flex: 1; min-width: 0; }
.chanlist b { display: block; height: 16px; padding-left: 2px; }
.chanlist .in { padding-left: 11px; }
.chanlist table { width: 100%; border-collapse: collapse; }
.chanlist th, .chanlist td { height: 16px; padding: 0 2px 0 0; font-weight: 400; line-height: 15px; }
.chanlist th { text-align: right; }
.chanlist td { width: 64px; padding-left: 1px; background: #2a2a2a; border-bottom: 1px solid #3d3d3d; }
.channels .vbar { margin-left: 3px; }
.channels .track { height: 38px; }
.mid { width: 75px; height: 4px; margin: 3px auto 0; }
.layertabs { height: 25px; }
.layertabs button { height: 18px; }
.layertabs .on { height: 20px; padding: 0 9px; }
.layertabs button:nth-child(2) { padding: 0 12px; }
.layers { flex: 1; display: flex; flex-direction: column; border: 1px solid #2a2a2a; border-top: 0; margin-bottom: 2px; padding: 1px 3px 4px; min-height: 0; }
.layers .panelmenu { padding-left: 5px; }
.layericons { display: flex; justify-content: flex-end; gap: 5px; height: 26px; padding-right: 2px; align-items: center; }
.layericons svg { width: 20px; height: 20px; }
.layerlist { flex: 1; background: #2a2a2a; display: flex; align-items: flex-end; border: 1px solid #222; }
.layerlist .hbar { flex: 1; }
.layerlist .track { width: 66px; }
.sidetabs { width: 20px; margin-left: 2px; display: flex; flex-direction: column; }
.sidetabs button { writing-mode: vertical-rl; width: 20px; padding: 10px 0; border: 1px solid #2d2d2d; }
.sidetabs .on { background: #777376; }

.row { display: flex; align-items: center; padding-left: 6px; border-bottom: 1px solid #383838; }
.time { height: 37px; padding-top: 3px; border-top: 1px solid #333; }
.slider { flex: 1; position: relative; display: flex; height: 31px; margin-left: 2px; padding: 1px 0 0 2px; background: #292929; border-bottom: 1px solid #777; border-right: 1px solid #777; overflow: hidden; min-width: 0; }
.slider span { flex: 1; min-width: 0; position: relative; color: #777; line-height: 14px; }
.slider .end { flex: none; width: 7px; }
.slider span::after { content: ""; position: absolute; left: 0; bottom: 0; width: 2px; height: 15px; background: #777; }
.slider em { position: absolute; left: 5px; top: 14px; font-style: normal; }
.num { width: 68px; height: 25px; padding: 0 6px; margin-right: 4px; background: #2a2a2a; border: 1px solid #383838; }
.cur { height: 19px; margin: 0 4px; padding: 0 4px; }
.play { display: flex; padding-right: 4px; }
.play button { width: 28px; height: 24px; display: grid; place-items: center; }
.play svg { width: 18px; height: 18px; }
.range { height: 31px; }
.rangebar { flex: 1; min-width: 0; height: 25px; padding: 3px; margin-right: 2px; background: #292929; border-bottom: 1px solid #777; }
.rangebar div { display: flex; align-items: center; height: 100%; padding: 0 4px; gap: 4px; background: #777374; }
.rangebar i { width: 10px; height: 13px; border-right: 1px solid #222; border-bottom: 1px solid #222; }
.pickmark { width: 10px; height: 8px; margin: 0 5px; }
.pick { appearance: none; width: 104px; padding-left: 4px; }
.key { width: 22px; height: 18px; border: 2px solid #999; display: grid; place-items: center; margin: 0 2px 0 0; }
.key svg { width: 20px; height: 14px; }
.win { margin: 0 6px 0 2px; }
.win svg { width: 14px; height: 14px; }
.cmd { height: 29px; }
.cmd label { width: 48px; padding-left: 12px; }
.cmd input, .cmd output { flex: 1; min-width: 0; height: 23px; background: #2a2a2a; }
.cmd output { background: #000; }
.help { height: 26px; }
.helpline { flex: 1; align-self: stretch; margin: 3px 4px 1px 0; border: 1px solid #303030; border-bottom-color: #666; display: flex; justify-content: flex-end; align-items: flex-end; }
.helpline svg { width: 12px; height: 12px; }
```
